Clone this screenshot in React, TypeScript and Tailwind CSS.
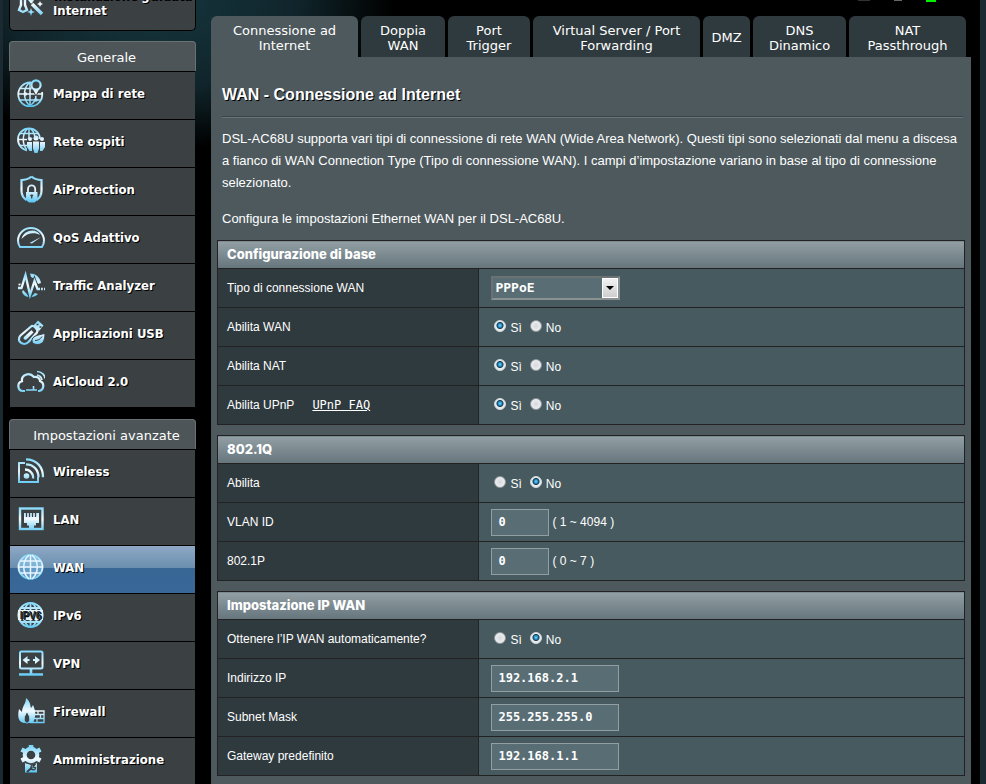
import { useState, type ReactNode } from 'react';

type NavItem = { label: string; icon: ReactNode };

const P = 'url(#ice)';
const DARK = '#3b4042';

function Icon({ children }: { children: ReactNode }) {
  return (
    <svg viewBox="0 0 28 28" className="w-7 h-7 shrink-0" fill="none" stroke={P} strokeWidth="1.8" aria-hidden="true">
      {children}
    </svg>
  );
}

const wizardIcon = (
  <Icon>
    <path d="M4 3v12l-2 5 4 2 4-2-2-5V5M11 8l4 5M15 3l-3 3" strokeWidth="2.4" />
    <path d="M15 14l10 10" strokeWidth="3.6" />
    <path d="M11 9c4-5 8-5 13-2-5 0-7 2-8 5zM14 18l1 3 3 1-3 1-1 3-1-3-3-1 3-1zM23 11l1 2 2 1-2 1-1 2-1-2-2-1 2-1z" fill={P} stroke="none" />
  </Icon>
);

const mapIcon = (
  <Icon>
    <path d="M14 3.500A12 12 0 1 0 25 13" />
    <path d="M13 4v23M2 15h23M3 9.500h13M3 21h21M12 4C6 10 6 20 12 26M14 26c4-3 5-7 5-10" strokeWidth="1.500" />
    <path d="M19 17l-5-9.500a5 5 0 1 1 10 0z" fill={P} stroke={DARK} strokeWidth="1" />
    <circle cx="19" cy="6" r="4.600" strokeWidth="2.200" fill={DARK} />
    <circle cx="8.500" cy="15" r="1.800" fill={P} stroke="none" />
    <circle cx="19" cy="21" r="1.800" fill={P} stroke="none" />
  </Icon>
);

const guestIcon = (
  <Icon>
    <circle cx="12" cy="12.500" r="11" />
    <path d="M12 1.500v22M1 12.500h22M3 6.500h18M3 18.500h18M10 2c-5 6-5 15 0 21M14 2c3 3 4 7 4 10" strokeWidth="1.500" />
    <path d="M10 12h18v14H10z" fill={DARK} stroke="none" />
    <g fill={P} stroke="none">
      <circle cx="13" cy="12" r="2" />
      <circle cx="25" cy="12" r="2" />
      <circle cx="19" cy="11" r="2.500" />
      <path d="M10 15h5v9h-2.500l-2.500-4zM23 15h5v5l-2.500 4H23z" />
      <path d="M16 14.500h6v7l-1.500 4.500h-3L16 21.500z" />
    </g>
  </Icon>
);

const shieldIcon = (
  <Icon>
    <path d="M14.500 1.500c3 2.500 6 3.500 10 3.500v11c0 4-2 7-5 9M14.500 1.500c-3 2.500-6 3.500-10 3.500v11c0 4 2 7 5 9" strokeWidth="2.200" />
    <path d="M11 18v-4a3.600 3.600 0 0 1 7.200 0v4" strokeWidth="1.800" />
    <path d="M9 17h11.500v8l-3 2.500h-5.500l-3-2.500z" fill={P} stroke="none" />
    <path d="M14.700 19.500v4M13.300 20.500h2.800" stroke={DARK} strokeWidth="1.300" />
  </Icon>
);

const gaugeIcon = (
  <Icon>
    <path d="M3 24h22c1.300-2 2-4 2-6.500a13 12.500 0 0 0-26 0c0 2.500.6 4.500 2 6.500z" strokeWidth="2" />
    <path d="M4.500 16C7 6 20 5 23 12c-5-3-13-2.500-18.500 4z" fill={P} stroke="none" />
    <path d="M12.500 20l11.500-6-9 6.500z" fill={P} stroke="none" />
  </Icon>
);

const trafficIcon = (
  <Icon>
    <path d="M13 2.500c5 0 10 3 11 9.500l-3 1-3-5-4-2zM6 19l3 3 3 4c-3 0-6-2-7-5zM14 26l4-4 3 1c-2 2-4 3-7 3z" fill={P} stroke="none" />
    <path d="M1.500 13.500h3" />
    <path d="M1 17h3.500l4-13 4.500 20 4.500-14 3 8h2.500" stroke={DARK} strokeWidth="4" />
    <path d="M1 17h3.500l4-13 4.500 20 4.500-14 3 8h2.500M24 18h1.800M27 18h1" strokeWidth="2.300" />
  </Icon>
);

const usbIcon = (
  <Icon>
    <path d="M3.500 16.500L14 7.500c2-2 8 3 6 6L11.500 23c-5 5-13-1-8-6.500z" strokeWidth="2.200" />
    <path d="M7 18l7.500-7 2 2.500-7 7c-2 1-4-1-2.500-2.500z" fill={P} stroke="none" />
    <path d="M16 7l5-5.500 5.500 5L22 12z" fill={P} stroke="none" />
    <path d="M19.500 5.500h2M22.500 8h2" stroke={DARK} strokeWidth="1.600" />
    <path d="M15 21.500c0-4 5-5.500 13-7 0 7-2 11-7.500 11-3 0-5.500-1-5.500-4z" fill={P} stroke={DARK} strokeWidth="1" />
    <path d="M18 21.500c3 0 5-1 7-4" stroke={DARK} strokeWidth="1" />
  </Icon>
);

const cloudIcon = (
  <Icon>
    <path d="M8 24H6a5 5 0 0 1-1-9.800C4 8.500 12 4 17 10c4-1 6 2 6 4 5 2 4 9-1 10h-1" strokeWidth="2.200" />
    <path d="M9 23h11M16.500 19v4M20 8a6 6 0 0 1 5 5M20 4.500c5 0 8 4 8 7" strokeWidth="1.600" />
  </Icon>
);

const wirelessIcon = (
  <Icon>
    <path d="M8 6H2v19h19v-5" strokeWidth="1.900" />
    <circle cx="9.500" cy="19" r="2.800" fill={P} stroke="none" />
    <path d="M8 12.500a8 8 0 0 1 8 9M9 7.300c8 0 12.500 6 12.500 13M9 2.300c11 0 17 8 17 18" strokeWidth="2.300" />
  </Icon>
);

const lanIcon = (
  <Icon>
    <rect x="3" y="3.500" width="22.500" height="20.500" strokeWidth="2.400" />
    <path d="M7 8h15v10h-3v2.500h-2V23h-5v-2.500h-2V18H7z" fill={P} stroke="none" />
    <path d="M9.500 7.500v4.500M12.500 7.500v4.500M15.500 7.500v4.500M18.500 7.500v4.500" stroke={DARK} strokeWidth="1.300" />
  </Icon>
);

const wanIcon = (
  <Icon>
    <circle cx="13.500" cy="14" r="12" fill="#8fd4fa" fillOpacity=".5" />
    <path d="M13.500 2v24M1.500 14h24M3.500 8h20M3.500 20h20M12 2C5 8 5 20 12 26M15 2c7 6 7 18 0 24" stroke="#e8f6ff" strokeWidth="1.500" />
  </Icon>
);

const ipv6Icon = (
  <Icon>
    <circle cx="13.500" cy="14" r="12" strokeWidth="2" />
    <path d="M13.500 2v24M4 7h19M4 21h19M12 2C8 5 7 9 7 13M12 26c-4-3-5-7-5-11M15 2c4 3 5 7 5 11M15 26c4-3 5-7 5-11" strokeWidth="1.800" />
    <path d="M1 9h25v10H1z" fill="#e4f5fd" stroke="none" />
    <text x="13.500" y="17.500" textAnchor="middle" fontSize="10" fontWeight="bold" fontFamily="Liberation Sans, sans-serif" fill="#22282b" stroke="none">
      IPV6
    </text>
  </Icon>
);

const vpnIcon = (
  <Icon>
    <rect x="3" y="2.500" width="22.500" height="17" rx="1.500" strokeWidth="2" />
    <path d="M5.500 11l5-4v3h2v2h-2v3zM23 11l-5-4v3h-2v2h2v3z" fill={P} stroke="none" />
    <path d="M14 20v5M2 25.500h24" strokeWidth="2.600" />
  </Icon>
);

const firewallIcon = (
  <Icon>
    <path d="M7 26C2 25 0 21 2 12l3 3c0-6 4-8 4-14 5 4 4 8 5 10l2-3c2 5 4 9 0 18z" fill={P} stroke="none" />
    <path d="M9 26c-3-3-2-7 1-11 3 4 4 8 1 11z" fill={DARK} stroke={P} strokeWidth="1" />
    <path d="M17 14h10v11.500H13M17 17.500h10M16 21.500h11M21 14v3.500M23.500 17.500v4M20 21.500v4" strokeWidth="1.300" />
  </Icon>
);

const adminIcon = (
  <Icon>
    <circle cx="14" cy="10" r="6.300" strokeWidth="4" />
    <path d="M14 0v3M14.100 0v3M4.500 4.500l4 2M23.500 4.500l-4 2M4.500 15.500l4-2M23.500 15.500l-4-2" strokeWidth="4.500" />
    <path d="M7.500 17.500l6.500 2 6.500-2V28h-13z" fill={P} stroke={DARK} strokeWidth="1" />
    <path d="M10 27l5-4.500" stroke={DARK} strokeWidth="2" />
    <path d="M18 19.500l-2 2.500 2.500.5c0 3-4.500 3-4.500 0 0-2 2-3 4-3z" stroke={DARK} strokeWidth="1.300" />
  </Icon>
);

const general: NavItem[] = [
  { label: 'Mappa di rete', icon: mapIcon },
  { label: 'Rete ospiti', icon: guestIcon },
  { label: 'AiProtection', icon: shieldIcon },
  { label: 'QoS Adattivo', icon: gaugeIcon },
  { label: 'Traffic Analyzer', icon: trafficIcon },
  { label: 'Applicazioni USB', icon: usbIcon },
  { label: 'AiCloud 2.0', icon: cloudIcon },
];

const advanced: NavItem[] = [
  { label: 'Wireless', icon: wirelessIcon },
  { label: 'LAN', icon: lanIcon },
  { label: 'WAN', icon: wanIcon },
  { label: 'IPv6', icon: ipv6Icon },
  { label: 'VPN', icon: vpnIcon },
  { label: 'Firewall', icon: firewallIcon },
  { label: 'Amministrazione', icon: adminIcon },
];

const tabs = [
  { label: 'Connessione ad Internet', size: 'grow-[131]' },
  { label: 'Doppia WAN', size: 'grow-[68]' },
  { label: 'Port Trigger', size: 'grow-[66]' },
  { label: 'Virtual Server / Port Forwarding', size: 'grow-[151]' },
  { label: 'DMZ', size: 'grow-[31]' },
  { label: 'DNS Dinamico', size: 'grow-[77]' },
  { label: 'NAT Passthrough', size: 'grow-[101]' },
];

function NavGroup({ title, items, active }: { title: string; items: NavItem[]; active?: string }) {
  return (
    <section>
      <h2 className="h-[30px] rounded-t-[4px] border border-b-0 border-[#6b7071] bg-[#4d5558] pl-2 text-center text-[13px] leading-[32px]">
        {title}
      </h2>
      <ul className="mx-px">
        {items.map((item) => (
          <li key={item.label}>
            <a
              href="#"
              className={`flex h-12 items-start gap-2 border-t border-black pl-[7px] pt-[7px] font-['DejaVu_Sans_Condensed','DejaVu_Sans',sans-serif] text-[13px] font-bold leading-[30px] [text-shadow:1px_1px_0_#000] ${
                item.label === active
                  ? 'bg-[linear-gradient(to_bottom,#8ea9c6_0%,#6b8fae_46%,#376695_46%,#386898_100%)]'
                  : 'bg-[#3b4042]'
              }`}
            >
              {item.icon}
              {item.label}
            </a>
          </li>
        ))}
      </ul>
    </section>
  );
}

function FormTable({ title, children }: { title: string; children: ReactNode }) {
  return (
    <table className="w-full table-fixed border-collapse border border-[#222] text-left text-xs">
      <colgroup>
        <col className="w-[35%]" />
        <col />
      </colgroup>
      <thead>
        <tr>
          <th
            colSpan={2}
            className="h-7 border border-[#222] bg-linear-to-b from-[#92a0a5] to-[#66757c] px-[9px] pb-0.5 font-[Inter,Arial,sans-serif] text-[13px] font-extrabold leading-[18px]"
          >
            {title}
          </th>
        </tr>
      </thead>
      <tbody>{children}</tbody>
    </table>
  );
}

function Row({ label, htmlFor, extra, children }: { label: string; htmlFor?: string; extra?: ReactNode; children: ReactNode }) {
  return (
    <tr className="h-[39px]">
      <th scope="row" className="border border-[#222] bg-[#2f3a3e] px-[9px] font-normal">
        <label htmlFor={htmlFor}>{label}</label>
        {extra}
      </th>
      <td className="border border-[#222] bg-[#475a5f] py-0 pl-3">
        {children}
      </td>
    </tr>
  );
}

function YesNo({ name, initial }: { name: string; initial: 'Sì' | 'No' }) {
  const [value, setValue] = useState<string>(initial);
  return (
    <div className="flex gap-2 pl-[3px]">
      {['Sì', 'No'].map((option) => (
        <label key={option} className="flex gap-1 leading-[18px]">
          <input
            type="radio"
            name={name}
            checked={value === option}
            onChange={() => setValue(option)}
            className="mt-[2px] size-3 appearance-none rounded-full border border-[#8a9194] bg-[radial-gradient(circle,#d4d8dc_0%,#e9ebee_60%,#fff_100%)] checked:border-[#cfd6da] checked:bg-[radial-gradient(circle_at_50%_45%,#7fd4f5_0px,#1c86bd_2px,#12384f_3px,#e8ecee_4px)]"
          />
          <span className="pt-px">{option}</span>
        </label>
      ))}
    </div>
  );
}

function Field({ id, value, size, hint }: { id: string; value: string; size: string; hint?: string }) {
  return (
    <div className="flex items-center gap-[3px]">
      <input
        id={id}
        type="text"
        defaultValue={value}
        className={`h-[27px] border border-[#929ea1] bg-[#596d74] px-1.5 pb-px font-['DejaVu_Sans_Mono',monospace] text-xs font-bold ${size}`}
      />
      {hint && <span>{hint}</span>}
    </div>
  );
}

export default function App() {
  const [tab, setTab] = useState(tabs[0].label);

  return (
    <div className="min-h-screen border-l-[3px] border-[#1b2a31] bg-black bg-[radial-gradient(ellipse_240px_150px_at_150px_0px,#16363e_0%,#10252b_60%,#000_100%)] bg-no-repeat font-['DejaVu_Sans',Verdana,sans-serif] text-white">
      <svg width="0" height="0" className="absolute" aria-hidden="true">
        <linearGradient id="ice" gradientUnits="userSpaceOnUse" x1="0" y1="0" x2="0" y2="28">
          <stop offset="0" stopColor="#6fd3fa" />
          <stop offset=".5" stopColor="#f2faff" />
          <stop offset="1" stopColor="#4fc3f3" />
        </linearGradient>
      </svg>

      <div className="flex min-h-screen border-r-[6px] border-[#1b2a31] pl-1.5 pr-[9px]">
        <aside className="mr-[15px] flex w-[187px] shrink-0 flex-col">
          <a
            href="#"
            className="mb-[10px] flex h-[31px] items-end gap-2 overflow-hidden whitespace-nowrap rounded-b-[5px] border border-t-0 border-black bg-[#3b4042] pb-3 pl-[7px] font-['DejaVu_Sans_Condensed','DejaVu_Sans',sans-serif] text-[13px] font-bold leading-[15px] [text-shadow:1px_1px_0_#000]"
          >
            {wizardIcon}
            <span>
              Installazione guidata
              <br />
              Internet
            </span>
          </a>
          <div className="flex flex-col gap-3">
            <NavGroup title="Generale" items={general} />
            <NavGroup title="Impostazioni avanzate" items={advanced} active="WAN" />
          </div>
        </aside>

        <main className="flex min-w-0 flex-1 flex-col">
          <div className="flex h-4 justify-end gap-6 pr-[35px]" aria-hidden="true">
            <span className="h-px w-3 bg-[#333]" />
            <span className="h-px w-2 bg-[#666]" />
            <span className="h-[2px] w-2.5 bg-[#00f000]" />
          </div>
          <nav className="flex gap-[3px] pr-[5px]">
            {tabs.map(({ label, size }) => (
              <button
                key={label}
                type="button"
                onClick={() => setTab(label)}
                className={`h-[41px] min-w-0 basis-0 rounded-t-[6px] px-2 pt-0.5 text-[13px] leading-[15px] ${size} ${
                  tab === label ? 'bg-[#4d595d]' : 'bg-[#2f3a3e]'
                }`}
              >
                {label}
              </button>
            ))}
          </nav>

          <div className="flex-1 bg-[#4d595d] px-1.5 pb-[7px] pt-[26px] font-['Liberation_Sans',Arial,sans-serif] text-xs">
            <div className="pl-[5px]">
              <h1 className="text-base font-bold leading-6 [text-shadow:1px_1px_0_#000]">WAN - Connessione ad Internet</h1>
              <hr className="mb-2.5 mr-0.5 mt-[9px] border-b border-t border-b-[#66757c] border-t-[#38444a]" />
              <p className="text-[13px] leading-[22px]">
                DSL-AC68U supporta vari tipi di connessione di rete WAN (Wide Area Network). Questi tipi sono selezionati dal menu a discesa a fianco di WAN Connection Type (Tipo di connessione WAN). I campi d’impostazione variano in base al tipo di connessione selezionato.
              </p>
              <p className="mb-2.5 mt-3.5 text-[13px] leading-[22px]">Configura le impostazioni Ethernet WAN per il DSL-AC68U.</p>
            </div>

            <form className="flex flex-col gap-2.5" onSubmit={(e) => e.preventDefault()}>
              <FormTable title="Configurazione di base">
                <Row label="Tipo di connessione WAN" htmlFor="wan-type">
                  <div className="relative w-[129px]">
                    <select
                      id="wan-type"
                      className="block h-6 w-full appearance-none border-2 border-[#6c7274] border-b-[#8b9092] border-r-[#8b9092] bg-[#596d74] px-0.5 font-['DejaVu_Sans_Mono',monospace] text-[13px] font-bold leading-[18px]"
                    >
                      <option>PPPoE</option>
                      <option>PPTP</option>
                      <option>L2TP</option>
                    </select>
                    <span className="pointer-events-none absolute inset-y-[2px] right-[2px] flex w-4 items-center justify-center border border-white bg-linear-to-b from-[#f2f2f2] to-[#cfcfcf]">
                      <svg width="8" height="4" viewBox="0 0 8 4" aria-hidden="true">
                        <path d="M0 0h8L4 4z" fill="#000" />
                      </svg>
                    </span>
                  </div>
                </Row>
                <Row label="Abilita WAN">
                  <YesNo name="wan" initial="Sì" />
                </Row>
                <Row label="Abilita NAT">
                  <YesNo name="nat" initial="Sì" />
                </Row>
                <Row
                  label="Abilita UPnP"
                  extra={
                    <a href="#" className="ml-[18px] font-['DejaVu_Sans_Mono',monospace] underline">
                      UPnP FAQ
                    </a>
                  }
                >
                  <YesNo name="upnp" initial="Sì" />
                </Row>
              </FormTable>

              <FormTable title="802.1Q">
                <Row label="Abilita">
                  <YesNo name="dot1q" initial="No" />
                </Row>
                <Row label="VLAN ID" htmlFor="vlan-id">
                  <Field id="vlan-id" value="0" size="w-[58px]" hint="( 1 ~ 4094 )" />
                </Row>
                <Row label="802.1P" htmlFor="dot1p">
                  <Field id="dot1p" value="0" size="w-[58px]" hint="( 0 ~ 7 )" />
                </Row>
              </FormTable>

              <FormTable title="Impostazione IP WAN">
                <Row label="Ottenere l’IP WAN automaticamente?">
                  <YesNo name="auto-ip" initial="No" />
                </Row>
                <Row label="Indirizzo IP" htmlFor="ip">
                  <Field id="ip" value="192.168.2.1" size="w-[128px]" />
                </Row>
                <Row label="Subnet Mask" htmlFor="mask">
                  <Field id="mask" value="255.255.255.0" size="w-[128px]" />
                </Row>
                <Row label="Gateway predefinito" htmlFor="gateway">
                  <Field id="gateway" value="192.168.1.1" size="w-[128px]" />
                </Row>
              </FormTable>
            </form>
          </div>
        </main>
      </div>
    </div>
  );
}
